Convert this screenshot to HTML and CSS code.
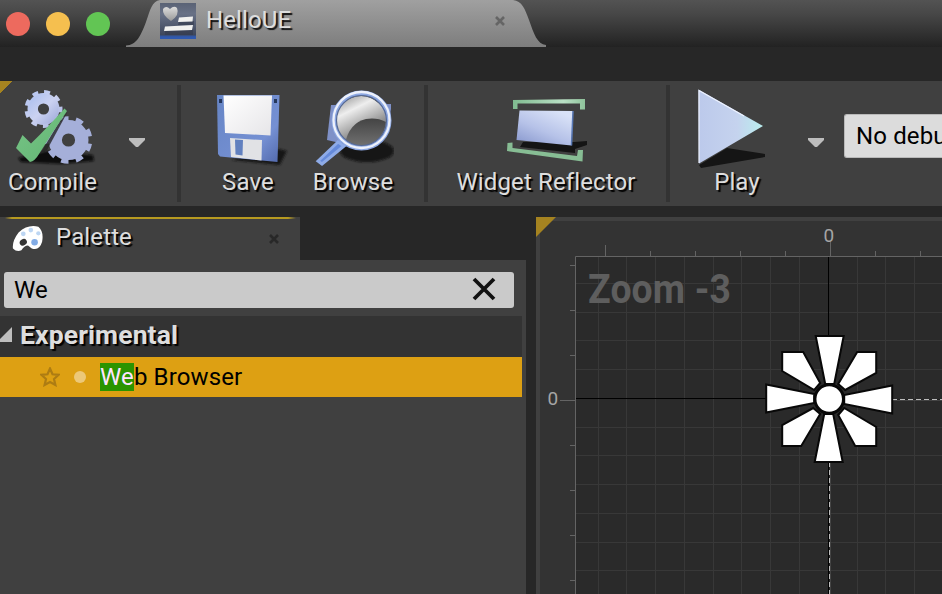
FILE: index.html
```html
<!DOCTYPE html>
<html lang="en">
<head>
<meta charset="utf-8">
<title>HelloUE</title>
<link rel="stylesheet" href="styles.css">
</head>
<body>
<header class="titlebar">
  <div class="lights"><i class="light red"></i><i class="light yellow"></i><i class="light green"></i></div>
  <div class="doc-tab">
    <svg class="tab-shape" viewBox="126 0 420 47" aria-hidden="true">
      <defs><linearGradient id="tab" x2="0" y2="1"><stop stop-color="#a0a0a0"/><stop offset="1" stop-color="#7d7d7d"/></linearGradient></defs>
      <path fill="url(#tab)" d="M126 47V45.500C137 45 141 35 146 22C150 10 152 1 160 0H513C522 1 525 9 529 20C534 34 537 44 546 45V47Z"/>
    </svg>
    <svg class="doc-icon" viewBox="0 0 36 36" aria-hidden="true">
      <defs><linearGradient id="doc" x2="0" y2="1"><stop stop-color="#5a6275"/><stop offset=".3" stop-color="#687186"/><stop offset=".88" stop-color="#3e475c"/><stop offset=".94" stop-color="#2f59b0"/></linearGradient>
      <linearGradient id="heart" x2="0" y2="1"><stop stop-color="#ddd"/><stop offset="1" stop-color="#999"/></linearGradient></defs>
      <path fill="url(#doc)" d="M0 0H36V36H0Z"/>
      <path fill="#333b4c" opacity=".6" d="M5 28l28-1v5H5zM19 18h15v4H18z"/>
      <path fill="url(#heart)" d="M3 6Q6 2 10 6Q14 2 17 5Q20 12 11 18Q2 12 3 6Z"/>
      <path fill="#f1f1ef" d="M19 14.500L33 13.500L32.500 18.500L18 19ZM5 23.500L33 22L32 27L4 28Z"/>
    </svg>
    <span class="doc-name">HelloUE</span>
    <svg class="tab-close" viewBox="0 0 12 12" aria-hidden="true"><path d="M2 2L10 10M10 2L2 10" stroke="#656565" stroke-width="2.600"/></svg>
  </div>
</header>

<nav class="toolbar">
  <section class="group compile-group">
    <button class="tool compile">
      <svg viewBox="7 86 90 82" width="90" height="82" aria-hidden="true">
        <defs><linearGradient id="gear" x2="1" y2="1"><stop stop-color="#b2c3ef"/><stop offset=".5" stop-color="#cbd2f1"/><stop offset="1" stop-color="#a9b3df"/></linearGradient>
        <linearGradient id="check" x2="1" y2="1"><stop stop-color="#78c487"/><stop offset="1" stop-color="#62b673"/></linearGradient>
        <filter id="soft"><feGaussianBlur stdDeviation="1.300"/></filter></defs>
        <path d="M17 158L46 151L92 155L93 161L60 164L20 162Z" fill="#111" filter="url(#soft)"/>
        <g fill="none" stroke="url(#gear)">
          <circle cx="42.500" cy="109" r="10.800" stroke-width="10.400"/>
          <circle cx="42.500" cy="109" r="17" stroke-width="4" pathLength="36" stroke-dasharray="2 2" stroke-dashoffset=".8"/>
          <circle cx="67.500" cy="140" r="13.300" stroke-width="13.400" stroke="#a5afd9"/>
          <circle cx="67.500" cy="140" r="21.300" stroke-width="5" stroke="#a5afd9" pathLength="36" stroke-dasharray="2 2" stroke-dashoffset="3"/>
        </g>
        <path d="M66.500 112L46 150L39 154L57 124Z" fill="#242424" opacity=".8"/>
        <path d="M15 148L21.500 135L30 143.500Q46 128 63.500 108.500L66 111Q51 133 38 154Q34 161 29 162Z" fill="url(#check)"/>
      </svg>
      <span>Compile</span>
    </button>
    <svg class="drop" viewBox="0 0 16 10" aria-hidden="true"><path d="M0 0H16V2L9 9H7L0 2Z" fill="#bdbdbd"/></svg>
  </section>
  <section class="group file-group">
    <button class="tool save">
      <svg viewBox="208 86 82 82" width="82" height="82" aria-hidden="true">
        <defs><linearGradient id="disk" x2="1" y2="1"><stop stop-color="#6685c5"/><stop offset=".7" stop-color="#7590d3"/><stop offset="1" stop-color="#5269ac"/></linearGradient>
        <linearGradient id="paper" x2="1" y2="1"><stop stop-color="#fff"/><stop offset="1" stop-color="#e6e5e8"/></linearGradient></defs>
        <path d="M232 160L280 149L288 151L281 165Z" fill="#181818" filter="url(#soft)"/>
        <path d="M218 95H280.500L278.500 162L221 156.500L219 154Z" fill="url(#disk)"/>
        <path d="M224.500 95.500H273L271.500 135.500L226 133Z" fill="url(#paper)"/>
        <path d="M231 138L263 140L262.500 160.500L232 157Z" fill="#e1e2e5"/>
        <path d="M236 139.500L244 140L243.500 155.500L236.500 154.500Z" fill="#6180bf"/>
        <path d="M220 99h3v4h-3zM275 99h3v4h-3z" fill="#26385c"/>
      </svg>
      <span>Save</span>
    </button>
    <button class="tool browse">
      <svg viewBox="312 86 82 82" width="82" height="82" aria-hidden="true">
        <defs><linearGradient id="lens" x2=".5" y2="1"><stop stop-color="#888"/><stop offset=".35" stop-color="#eee"/><stop offset=".8" stop-color="#888"/></linearGradient>
        <linearGradient id="dark" x2="0" y2="1"><stop stop-color="#444"/><stop offset="1" stop-color="#777"/></linearGradient>
        <clipPath id="glass"><circle cx="361" cy="121" r="25"/></clipPath></defs>
        <ellipse cx="367" cy="151" rx="27" ry="11" fill="#121212" filter="url(#soft)"/>
        <path d="M331 105L391 104V109L387 130L340 143L327 140Z" fill="#7f91c8"/>
        <path d="M338 142L318 161L322 164L344 146Z" fill="#658ada" stroke="#8eabe7" stroke-width="3"/>
        <circle cx="361" cy="121" r="25" fill="url(#lens)"/>
        <path clip-path="url(#glass)" d="M345 144Q349 123 366 119Q378 117 388 123L382 150Z" fill="url(#dark)"/>
        <circle cx="361.500" cy="120.500" r="27.500" fill="none" stroke="#8ca7e2" stroke-width="5"/>
        <circle cx="361.500" cy="120" r="28" fill="none" stroke="#edf1fb" stroke-width="2.300"/>
        <circle cx="361.500" cy="120.500" r="25" fill="none" stroke="#556994" stroke-width="1.200"/>
      </svg>
      <span>Browse</span>
    </button>
  </section>
  <section class="group reflector-group">
    <button class="tool">
      <svg viewBox="505 86 82 82" width="82" height="82" aria-hidden="true">
        <defs><linearGradient id="screen" x1=".7" x2="0" y2="1"><stop stop-color="#d9e2f7"/><stop offset=".5" stop-color="#b6c2e8"/><stop offset="1" stop-color="#8494cb"/></linearGradient>
        <linearGradient id="bracket"><stop stop-color="#80bb90"/><stop offset=".7" stop-color="#bae0c5"/><stop offset="1" stop-color="#8fc39b"/></linearGradient></defs>
        <path d="M520 147L523 142L574 142L587 141V145L575 149V153Z" fill="#141414"/>
        <path d="M519.500 110.500L573 111L571.500 145.500L516.500 140Z" fill="url(#screen)"/>
        <path d="M573 111L571.500 145.500" stroke="#5878b4" stroke-width="1.500"/>
        <path d="M513 109V100L585 99V109.500H580V103.500H517.500V109Z" fill="url(#bracket)"/>
        <path d="M507.500 143L512.500 142.500V148L577 156L578 150H583L582.500 161.500L507 151Z" fill="#87bd94"/>
      </svg>
      <span>Widget Reflector</span>
    </button>
  </section>
  <section class="group play-group">
    <button class="tool play">
      <svg viewBox="696 86 82 82" width="82" height="82" aria-hidden="true">
        <defs><linearGradient id="play"><stop stop-color="#bcc9eb"/><stop offset=".6" stop-color="#c5d3ee"/><stop offset="1" stop-color="#b9eeee"/></linearGradient></defs>
        <path d="M699 165L727 148L765 154V157L701 168Z" fill="#151515"/>
        <path d="M698.500 89.500L763 126L699 163.500Z" fill="url(#play)"/>
        <path d="M699 163V90.500L744 116" fill="none" stroke="#edf2ff" stroke-width="1.200"/>
      </svg>
      <span>Play</span>
    </button>
    <svg class="drop" viewBox="0 0 16 10" aria-hidden="true"><path d="M0 0H16V2L9 9H7L0 2Z" fill="#bdbdbd"/></svg>
    <div class="debug-select">No debug</div>
  </section>
</nav>

<main class="workspace">
  <aside class="palette">
    <div class="palette-tab">
      <svg class="palette-icon" viewBox="0 0 34 28" aria-hidden="true">
        <path fill="#fff" d="M7 7Q17-2 28 1Q34 6 32 17Q29 27 21 24L17 21Q13 21 10 26Q5 28 1 24Q0 16 7 7Z"/>
        <ellipse cx="12" cy="17.500" rx="4" ry="3.300" fill="#343434" transform="rotate(-35 12 17.500)"/>
        <g fill="#bdd6f3"><circle cx="24" cy="17.500" r="3.500" fill="#82ace6"/><circle cx="12" cy="8.500" r="2.500"/><circle cx="20" cy="4.500" r="2.500"/><circle cx="28" cy="8" r="2.300"/></g>
      </svg>
      <span>Palette</span>
      <svg class="palette-close" viewBox="0 0 12 12" aria-hidden="true"><path d="M2 2L10 10M10 2L2 10" stroke="#282828" stroke-width="2.600"/></svg>
    </div>
    <div class="palette-body">
      <div class="search"><span>We</span>
        <svg viewBox="0 0 24 24" aria-hidden="true"><path d="M2 2L22 22M22 2L2 22" stroke="#111" stroke-width="3.800"/></svg>
      </div>
      <div class="category">
        <svg viewBox="0 0 13 15" aria-hidden="true"><path d="M-3 15L12 0V15Z" fill="#bebebe"/></svg>
        <span>Experimental</span>
      </div>
      <div class="entry">
        <svg class="star" viewBox="0 0 20 20" aria-hidden="true"><path d="M10 1.500L12.500 7.300L18.500 7.800L14 12L15.400 18L10 15L4.600 18L6 12L1.500 7.800L7.500 7.300Z" fill="none" stroke="#ad7c13" stroke-width="2.200"/></svg>
        <i class="dot"></i>
        <span class="entry-name"><mark>We</mark>b Browser</span>
      </div>
    </div>
  </aside>
  <section class="designer">
    <svg class="canvas" viewBox="536 217 406 377" width="406" height="377">
      <path fill="#404040" d="M536 217H942V594H536Z"/>
      <path fill="#333" d="M540 221H942V594H540Z"/>
      <path fill="#2a2a2a" d="M576 257H942V594H576Z"/>
      <path fill="#a58320" d="M536 217H556L536 237Z"/>
      <path stroke="#383838" d="M598.500 257V594M626.500 257V594M655.500 257V594M684.500 257V594M713.500 257V594M741.500 257V594M770.500 257V594M799.500 257V594M857.500 257V594M885.500 257V594M914.500 257V594M576 283.500H942M576 312.500H942M576 340.500H942M576 369.500H942M576 427.500H942M576 455.500H942M576 484.500H942M576 513.500H942M576 542.500H942M576 570.500H942"/>
      <path fill="none" stroke="#646464" d="M575.500 594V256.500H942M605.500 245V256M650.500 251V256M695.500 251V256M740.500 251V256M785.500 251V256M830.500 242V256M875.500 251V256M920.500 251V256M570 265.500H575M570 310.500H575M570 355.500H575M560 400.500H575M570 445.500H575M570 490.500H575M570 535.500H575M570 580.500H575"/>
      <path stroke="#000" d="M828.500 257V594M576 398.500H892"/>
      <path stroke="#444" d="M830.500 462V594M892 400.500H942"/>
      <path stroke="#222" d="M829.500 462V594M892 399.500H942"/>
      <path stroke="#bdbdbd" stroke-dasharray="5 3" d="M829.500 462V594M892 399.500H942"/>
      <text class="ruler-label" x="829" y="242" text-anchor="middle">0</text>
      <text class="ruler-label" x="553" y="405" text-anchor="middle">0</text>
      <text class="zoom-label" x="588" y="302.500" textLength="143" lengthAdjust="spacingAndGlyphs">Zoom -3</text>
      <g transform="translate(829.200 399)" fill="#fff" stroke="#080808" stroke-width="2">
        <g id="petals"><path d="M-13.500-63H14.500L5-15H-4Z"/><path d="M-47-47H-26L-9-16L-15-9L-47-28Z"/></g>
        <use href="#petals" transform="rotate(90)"/><use href="#petals" transform="rotate(180)"/><use href="#petals" transform="rotate(270)"/>
        <circle r="14.300" stroke-width="3"/>
      </g>
    </svg>
  </section>
</main>
</body>
</html>
```
FILE: styles.css
```css
* { box-sizing: border-box; }
body {
  margin: 0;
  width: 942px;
  height: 594px;
  overflow: hidden;
  background: #272727;
  color: #dedede;
  font: 24px/28px Roboto, sans-serif;
  letter-spacing: .13px;
}
svg { display: block; flex: none; }
.titlebar {
  display: flex;
  height: 47px;
  background: linear-gradient(#535353, #474747 30%, #222);
}
.lights { display: flex; gap: 16px; padding: 12px 0 0 6px; width: 126px; }
.light { width: 24px; height: 24px; border-radius: 50%; }
.red { background: #ed6a5e; }
.yellow { background: #f5bf4f; }
.green { background: #62c554; }
.doc-tab { position: relative; display: flex; width: 420px; height: 47px; padding: 3px 0 0 34px; }
.tab-shape { position: absolute; inset: 0; width: 420px; height: 47px; }
.doc-icon { position: relative; width: 36px; height: 36px; }
.doc-name { position: relative; width: 288px; margin: 3px 0 0 10px; text-shadow: 2px 2px 1px #111; }
.tab-close { position: relative; width: 12px; height: 12px; margin-top: 12px; }

.toolbar {
  display: flex;
  height: 125px;
  margin-top: 34px;
  background: linear-gradient(135deg, #a58320 9px, transparent 9px) no-repeat, #404040;
}
.group { display: flex; height: 117px; margin-top: 4px; border-right: 4px solid #333; }
.compile-group { width: 181px; }
.file-group { width: 247px; padding-left: 17px; gap: 5px; }
.reflector-group { width: 242px; justify-content: center; padding-right: 2px; }
.play-group { width: 272px; border: 0; padding-left: 12px; }
.tool {
  display: flex;
  flex-direction: column;
  align-items: center;
  width: 105px;
  padding: 1px 0 0;
  border: 0;
  background: none;
  color: inherit;
  font: inherit;
  letter-spacing: inherit;
  white-space: nowrap;
  text-shadow: 2px 2px 1px #000;
}
.save, .browse { width: 100px; }
.play { width: 110px; }
.reflector-group .tool { width: 190px; }
.drop { width: 16px; height: 10px; margin: 53px 0 0 24px; }
.play-group .drop { margin-left: 16px; }
.debug-select {
  width: 98px;
  height: 44px;
  margin: 29px 0 0 20px;
  padding: 7px 0 0 11px;
  border: 1px solid #b9b9b9;
  border-width: 1px 0 1px 1px;
  border-radius: 3px 0 0 3px;
  background: #dcdcdc;
  color: #000;
  white-space: nowrap;
  overflow: hidden;
}

.workspace { display: flex; justify-content: space-between; height: 377px; margin-top: 11px; }
.palette { width: 526px; }
.palette-tab {
  display: flex;
  width: 300px;
  height: 43px;
  padding: 6px 0 0 12px;
  background: linear-gradient(90deg, transparent 5px, #b79a20 12px, #b79a20 288px, transparent 296px) 0 0 / 100% 2px no-repeat, #404040;
}
.palette-icon { width: 32px; height: 28px; margin-top: 2px; }
.palette-tab span { width: 224px; padding-left: 12px; text-shadow: 2px 2px 1px #000; }
.palette-close { width: 12px; height: 12px; margin-top: 10px; }
.palette-body { height: 334px; padding-top: 12px; background: #404040; }
.search {
  display: flex;
  justify-content: space-between;
  width: 510px;
  height: 36px;
  margin-left: 4px;
  padding: 4px 18px 0 10px;
  border-radius: 3px;
  background: #cacaca;
  color: #000;
}
.search svg { width: 24px; height: 24px; margin-top: 1px; }
.category {
  display: flex;
  width: 522px;
  height: 41px;
  margin-top: 8px;
  padding-top: 5px;
  background: #333;
  font-size: 26.5px;
  font-weight: 700;
  text-shadow: 2px 2px 1px #000;
}
.category svg { width: 13px; height: 15px; margin: 6px 7px 0 0; }
.entry { display: flex; align-items: center; width: 522px; height: 40px; padding-left: 40px; background: #dda013; color: #000; }
.star { width: 20px; height: 20px; }
.dot { width: 12px; height: 12px; margin: 0 14px; border-radius: 50%; background: #ecc878; }
.entry-name { white-space: nowrap; }
.entry-name mark { background: #2b9400; color: #ffe4ff; }
.designer { width: 406px; }
.ruler-label { fill: #a5a5a5; font: 19px Roboto, sans-serif; }
.zoom-label { fill: #5e5e5e; font: 700 41px Roboto, sans-serif; }
```
